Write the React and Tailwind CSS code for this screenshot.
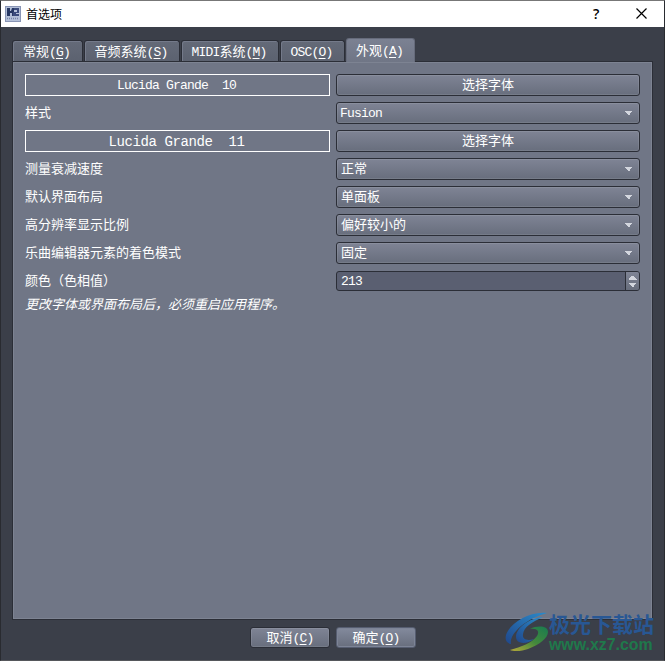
import React from 'react';

const CJK = "font-['Noto_Sans_CJK_SC',sans-serif]";
const RAISED =
  'bg-gradient-to-b from-[#7f8495] to-[#686e7d] border border-[#2b2e37] rounded-[3px] shadow-[inset_0_0_0_1px_rgba(255,255,255,0.09)]';

function Latin({ children, big = false, className = '' }) {
  return (
    <span
      className={`whitespace-pre font-['Liberation_Mono',monospace] ${
        big ? 'text-[14px] tracking-[-0.4px]' : 'text-[13px] tracking-[-0.8px]'
      } ${className}`}
    >
      {children}
    </span>
  );
}

function Mnemonic({ text, letter }) {
  return (
    <span className="whitespace-nowrap">
      {text}
      <Latin>
        (<span className="underline underline-offset-2 decoration-1">{letter}</span>)
      </Latin>
    </span>
  );
}

function Tab({ width, text, letter, latin = false, active = false }) {
  return (
    <div
      className={`${width} flex justify-center rounded-t-[3px] border border-b-0 pr-[2px] ${
        active
          ? 'h-[24px] -mb-px relative z-10 bg-gradient-to-b from-[#7b8192] to-[#707686] border-[#666b7b] pt-[2px]'
          : 'h-[21px] bg-gradient-to-b from-[#646a78] to-[#5c6270] border-[#2b2e37] pt-px shadow-[inset_1px_1px_0_#747a8a]'
      }`}
    >
      <Mnemonic text={latin ? <Latin>{text}</Latin> : text} letter={letter} />
    </div>
  );
}

function FontRow({ name, big }) {
  return (
    <div className="flex h-[22px] gap-[6px]">
      <div className="flex w-[305px] items-center justify-center border border-white pt-[2px]">
        <Latin big={big} className="-ml-[2px]">{name}</Latin>
      </div>
      <button className={`w-[304px] ${RAISED} flex items-center justify-center pb-[2px]`}>选择字体</button>
    </div>
  );
}

function SelectRow({ label, value, latin = false }) {
  return (
    <div className="flex h-[22px] items-center">
      <span className="w-[311px] whitespace-nowrap pb-[2px]">{label}</span>
      <div className={`w-[304px] h-[22px] ${RAISED} flex items-center justify-between pr-[6px] ${latin ? 'pl-[3px]' : 'pl-[4px]'}`}>
        {latin ? <Latin className="pt-[2px]">{value}</Latin> : <span className="pb-[2px]">{value}</span>}
        <svg className="-mt-px" width="9" height="5" viewBox="0 0 9 5" shapeRendering="crispEdges">
          <path d="M0.5 0.5h8L5.5 4.5h-2z" fill="#d3d6de" />
        </svg>
      </div>
    </div>
  );
}

function AppIcon() {
  return (
    <svg width="16" height="16" viewBox="0 0 16 16">
      <rect width="16" height="16" fill="#8995b5" />
      <rect x="1" y="1" width="14" height="14" fill="#b4c0d8" />
      <path d="M2 2h3v3h1l1-3h2v8H7V7H5v3H2z" fill="#263763" />
      <path d="M9 2h5v5h-3v1h3v2H8V6h4V4H9z" fill="#3b4b7c" />
      <path d="M2 12.500h12" stroke="#7785a8" strokeDasharray="1 1" strokeWidth="1.500" />
    </svg>
  );
}

function Watermark() {
  return (
    <div className="absolute left-[504px] top-[610px] flex">
      <svg width="44" height="42" viewBox="0 0 44 42">
        <defs>
          <linearGradient id="swooshBlue" x1="0" y1="1" x2="1" y2="0">
            <stop offset="0" stopColor="#20478b" />
            <stop offset="1" stopColor="#2b8bcb" />
          </linearGradient>
          <linearGradient id="swooshGreen" x1="0" y1="1" x2="1" y2="0">
            <stop offset="0" stopColor="#b6a83a" />
            <stop offset=".5" stopColor="#43893c" />
            <stop offset="1" stopColor="#197b50" />
          </linearGradient>
        </defs>
        <path d="M42 2C24 0 5 12 1 24c-1 5 0 8 5 9C4 23 20 8 42 2z" fill="url(#swooshBlue)" />
        <path d="M38 6C24 7 11 17 11 26c0 7 10 8 18 2-6 2-12 1-11-5 1-7 9-12 20-17z" fill="url(#swooshBlue)" />
        <path d="M25 18c7-1 10 2 7 7C27 32 16 36 5 39c4 2 13 1 18-1 11-4 20-11 20-17 0-6-10-7-18-3z" fill="url(#swooshGreen)" />
      </svg>
      <div className="flex flex-col">
        <span className={`${CJK} h-[25px] whitespace-nowrap text-[21px] leading-[24px] font-bold text-[#285794]`}>极光下载站</span>
        <span className="h-[18px] font-['Liberation_Sans',Arial,sans-serif] text-[15.900px] leading-[18px] font-bold text-[#20784b]">
          www.xz7.com
        </span>
      </div>
    </div>
  );
}

export default function App() {
  return (
    <div className={`relative h-[661px] w-[665px] overflow-hidden border border-t-[#777] border-l-[#292b30] border-r-[#292b30] border-b-[#55575b] bg-[#3b3f49] text-[13px] leading-[18px] text-white ${CJK}`}>
      <header className="flex h-[26px] items-center bg-white pl-[4px] text-black">
        <AppIcon />
        <span className="ml-[5px] text-[12px] -mt-px">首选项</span>
        <span className="ml-auto w-[10px] -mt-px font-['Open_Sans',sans-serif] text-[14px] font-semibold">?</span>
        <svg className="ml-[33px] mr-[17px] -mt-px" width="11" height="11" viewBox="0 0 11 11">
          <path d="M.5.5l10 10m0-10l-10 10" stroke="black" strokeWidth="1.200" />
        </svg>
      </header>

      <main className="px-[11px] pt-[11px]">
        <nav className="flex h-[23px] items-end gap-px">
          <Tab width="w-[71px]" text="常规" letter="G" />
          <Tab width="w-[96px]" text="音频系统" letter="S" />
          <Tab width="w-[98px]" text={<><Latin>MIDI</Latin>系统</>} letter="M" />
          <Tab width="w-[65px]" text="OSC" letter="O" latin />
          <Tab width="w-[69px]" text="外观" letter="A" active />
        </nav>
        <section className="h-[559px] w-[641px] border border-[#2b2e37] bg-[#707686] pl-[12px] pt-[12px] shadow-[inset_0_0_0_1px_#7d8392]">
          <div className="flex flex-col gap-[6px]">
            <FontRow name="Lucida Grande  10" />
            <SelectRow label="样式" value="Fusion" latin />
            <FontRow name="Lucida Grande  11" big />
            <SelectRow label="测量衰减速度" value="正常" />
            <SelectRow label="默认界面布局" value="单面板" />
            <SelectRow label="高分辨率显示比例" value="偏好较小的" />
            <SelectRow label="乐曲编辑器元素的着色模式" value="固定" />
            <div className="flex h-[22px] items-center">
              <span className="w-[311px] pb-[2px]">颜色（色相值）</span>
              <div className="flex h-[20px] w-[304px] justify-between overflow-hidden rounded-[3px] border border-[#2b2e37] bg-[#5a5f71]">
                <Latin className="pl-[4px] pt-px">213</Latin>
                <div className="flex w-[14px] items-center justify-center border-l border-[#2b2e37] bg-gradient-to-b from-[#7f8495] to-[#686e7d]">
                  <svg width="9" height="12" viewBox="0 0 9 12" shapeRendering="crispEdges">
                    <path d="M3.500 0.500h2l3 4h-8zM.5 7.500h8l-3 4h-2z" fill="#d3d6de" />
                  </svg>
                </div>
              </div>
            </div>
          </div>
          <p className="mt-[3px] whitespace-nowrap italic">更改字体或界面布局后，必须重启应用程序。</p>
        </section>
      </main>

      <footer className="flex gap-[6px] pl-[249px] pt-[7px]">
        <button className={`flex h-[21px] w-[80px] items-center justify-center ${RAISED}`}>
          <Mnemonic text="取消" letter="C" />
        </button>
        <button className="flex h-[21px] w-[80px] items-center justify-center rounded-[3px] border border-[#565d70] bg-gradient-to-b from-[#838a9d] to-[#686e7d] shadow-[inset_0_0_0_1px_#7d8496]">
          <Mnemonic text="确定" letter="O" />
        </button>
      </footer>

      <Watermark />
    </div>
  );
}
